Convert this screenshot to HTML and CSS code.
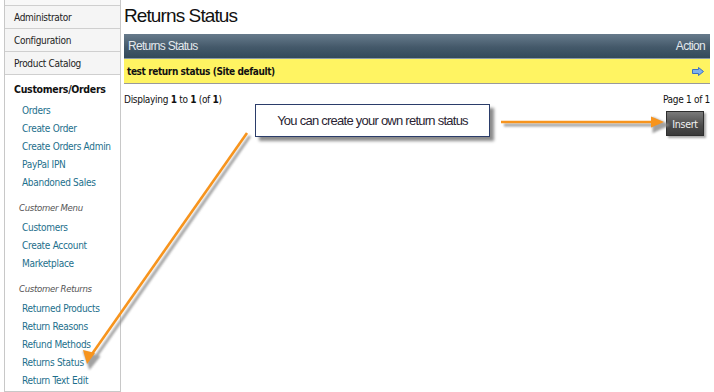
FILE: index.html
```html
<!DOCTYPE html>
<html lang="en">
<head>
    <meta charset="UTF-8">
    <meta name="viewport" content="width=device-width, initial-scale=1.0">
    <title>Returns Status</title>
    <link rel="stylesheet" href="styles.css">
</head>
<body>
    <div class="page">
        <div class="sidebar">
            <div class="side-row side-top"></div>
            <div class="side-row">Administrator</div>
            <div class="side-row">Configuration</div>
            <div class="side-row">Product Catalog</div>
            <div class="side-open">
                <h3>Customers/Orders</h3>
                <a href="#">Orders</a>
                <a href="#">Create Order</a>
                <a href="#">Create Orders Admin</a>
                <a href="#">PayPal IPN</a>
                <a href="#">Abandoned Sales</a>
                <p class="side-label">Customer Menu</p>
                <a href="#">Customers</a>
                <a href="#">Create Account</a>
                <a href="#">Marketplace</a>
                <p class="side-label">Customer Returns</p>
                <a href="#">Returned Products</a>
                <a href="#">Return Reasons</a>
                <a href="#">Refund Methods</a>
                <a href="#">Returns Status</a>
                <a href="#">Return Text Edit</a>
            </div>
        </div>

        <div class="main">
            <h1>Returns Status</h1>
            <div class="grid">
                <div class="grid-head">
                    <span>Returns Status</span>
                    <span>Action</span>
                </div>
                <div class="grid-row">
                    <span>test return status (Site default)</span>
                    <svg class="go" width="12" height="9" viewBox="0 0 12 9">
                        <path d="M0.5 2.5 H6.5 V0.5 L11.5 4.5 L6.5 8.5 V6.5 H0.5 Z" fill="#7fb2ec" stroke="#3d6fc4" stroke-width="1"/>
                    </svg>
                </div>
            </div>
            <div class="pager">
                <p>Displaying <b>1</b> to <b>1</b> (of <b>1</b>)</p>
                <div class="pager-right">
                    <p>Page 1 of 1</p>
                    <button class="insert">Insert</button>
                </div>
            </div>
        </div>
    </div>

    <div class="callout">You can create your own return status</div>

    <svg class="arrows" width="714" height="392" viewBox="0 0 714 392">
        <defs>
            <filter id="soft" x="-20%" y="-20%" width="140%" height="140%">
                <feGaussianBlur stdDeviation="1.3"/>
            </filter>
        </defs>
        <g stroke="#8a8a8a" stroke-width="3" fill="#8a8a8a" opacity="0.8" filter="url(#soft)">
            <line x1="504" y1="125" x2="656" y2="125"/>
            <path d="M654 119 L667 125 L654 131 Z"/>
            <line x1="250" y1="136" x2="95" y2="358"/>
            <path d="M85 353 L90 367 L98 357 Z"/>
        </g>
        <g stroke="#f7941d" stroke-width="2.6" fill="#f7941d">
            <line x1="501" y1="122" x2="653" y2="122"/>
            <path d="M651 116.5 L664 122 L651 127.5 Z" stroke="none"/>
            <line x1="247" y1="133" x2="92" y2="354"/>
            <path d="M83 350 L87 364 L95 353 Z" stroke="none"/>
        </g>
    </svg>
</body>
</html>
```

FILE: styles.css
```css
body {
    margin: 0;
    background: #ffffff;
    font-family: "DejaVu Sans Condensed", "DejaVu Sans", sans-serif;
    font-size: 10px;
    letter-spacing: -0.3px;
    color: #111;
    position: relative;
}
.page {
    display: flex;
    align-items: flex-start;
    width: 714px;
    height: 392px;
    overflow: hidden;
}
.sidebar {
    margin-left: 4px;
    width: 115px;
    height: 391px;
    border-left: 1px solid #c8c8c8;
    border-right: 1px solid #c8c8c8;
    border-bottom: 1px solid #c8c8c8;
}
.side-row {
    height: 22px;
    line-height: 23px;
    padding-left: 9px;
    background: #f5f5f5;
    border-bottom: 1px solid #cfcfcf;
    color: #222;
}
.side-top {
    height: 5px;
    background: #f8f8f8;
}
.side-open {
    padding: 5px 0 0 0;
}
.side-open h3 {
    margin: 0 0 4px 0;
    padding-left: 9px;
    font-size: 10.5px;
    line-height: 18px;
    color: #111;
}
.side-open a {
    display: block;
    padding-left: 17px;
    line-height: 18px;
    color: #1d6f8c;
    text-decoration: none;
}
.side-label {
    margin: 7px 0 2px 0;
    padding-left: 14px;
    line-height: 18px;
    font-size: 9.5px;
    font-style: italic;
    color: #555;
}
.main {
    margin-left: 3px;
    width: 586px;
}
h1 {
    margin: 0;
    height: 34px;
    line-height: 31px;
    font-family: "Liberation Sans", Arial, sans-serif;
    font-size: 19px;
    letter-spacing: -0.9px;
    font-weight: normal;
    color: #111;
}
.grid {
    border-bottom: 1px solid #9a9a9a;
}
.grid-head {
    display: flex;
    justify-content: space-between;
    align-items: center;
    height: 24px;
    padding: 0 5px 0 4px;
    background: linear-gradient(#677b8c, #44596a 55%, #33495a);
    border-bottom: 1px solid #8b9aa6;
    font-family: "Liberation Sans", Arial, sans-serif;
    font-size: 12px;
    letter-spacing: -0.7px;
    color: #e4e9ed;
}
.grid-row {
    display: flex;
    justify-content: space-between;
    align-items: center;
    height: 24px;
    padding: 0 6px 0 3px;
    background: #fff462;
    font-weight: bold;
    font-size: 10px;
    letter-spacing: -0.4px;
    color: #111;
}
.go {
    display: block;
}
.pager {
    display: flex;
    justify-content: space-between;
    align-items: flex-start;
    padding-top: 9px;
}
.pager p {
    margin: 0;
    line-height: 13px;
}
.pager-right {
    display: flex;
    flex-direction: column;
    align-items: flex-end;
}
.insert {
    margin: 5px 6px 0 0;
    width: 38px;
    height: 25px;
    padding: 0;
    border: 1px solid #2e2e2e;
    background: linear-gradient(#7a7a7a, #4a4a4a 60%, #3a3a3a);
    color: #f2f2f2;
    font-family: inherit;
    font-size: 10.5px;
    letter-spacing: -0.3px;
    box-shadow: 2px 2px 2px #aaa;
}
.callout {
    position: absolute;
    left: 255px;
    top: 104px;
    width: 233px;
    height: 31px;
    line-height: 31px;
    border: 1px solid #2b3d6a;
    background: #fff;
    box-shadow: 4px 4px 3px #8c8c8c;
    text-align: center;
    white-space: nowrap;
    font-family: "Liberation Sans", Arial, sans-serif;
    font-size: 13px;
    letter-spacing: -0.75px;
    color: #2b1f33;
}
.arrows {
    position: absolute;
    left: 0;
    top: 0;
    pointer-events: none;
}
```
